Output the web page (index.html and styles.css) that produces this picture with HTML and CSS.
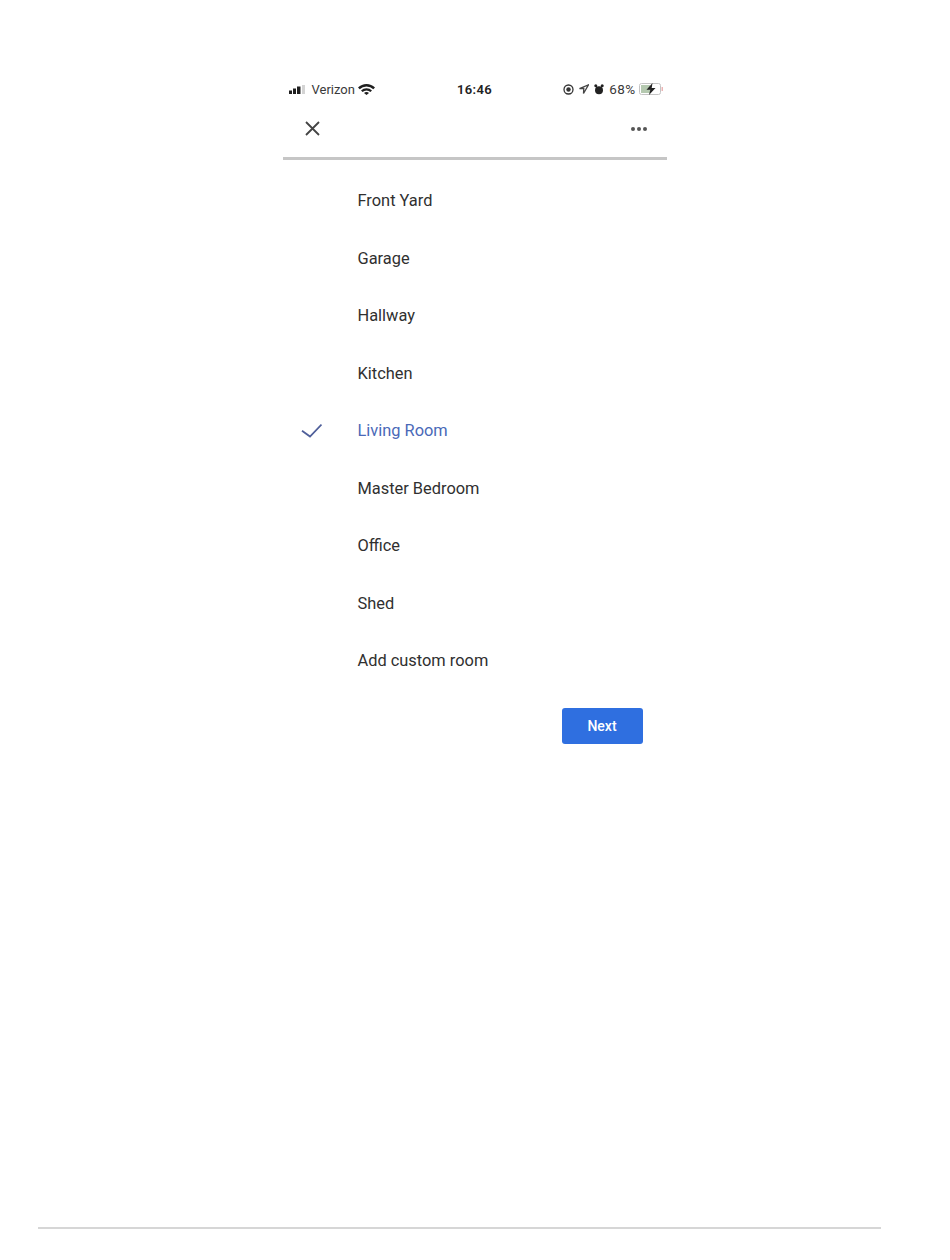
FILE: index.html
```html
<!DOCTYPE html>
<html lang="en">
<head>
  <meta charset="UTF-8" />
  <title>Choose a room</title>
  <link rel="stylesheet" href="styles.css">
</head>
<body>
  <div class="page">
    <div class="phone">
      <div class="status-bar">
        <div class="status-left">
          <svg class="signal" width="18" height="9" viewBox="0 0 18 9">
            <rect x="0" y="5.500" width="3" height="3.500" fill="#1f1f1f"/>
            <rect x="4" y="3.500" width="3" height="5.500" fill="#1f1f1f"/>
            <rect x="8" y="1.500" width="3.500" height="7.500" fill="#1f1f1f"/>
            <rect x="13" y="0" width="3" height="9" fill="#d4d4d4"/>
          </svg>
          <span class="carrier">Verizon</span>
          <svg class="wifi" width="17" height="11" viewBox="0 0 17 11">
            <path d="M0 3.600a12 12 0 0 1 17 0L15.300 5.300a9.600 9.600 0 0 0-13.600 0z" fill="#1f1f1f"/>
            <path d="M3 6.500a7.800 7.800 0 0 1 11 0L12.400 8.100a5.500 5.500 0 0 0-7.800 0z" fill="#1f1f1f"/>
            <path d="M6 9a3.400 3.400 0 0 1 5 0L8.500 11z" fill="#1f1f1f"/>
          </svg>
        </div>
        <span class="clock">16:46</span>
        <div class="status-right">
          <svg width="11" height="11" viewBox="0 0 11 11">
            <circle cx="5.500" cy="5.500" r="4.500" fill="none" stroke="#333" stroke-width="1.300"/>
            <circle cx="5.500" cy="5.500" r="2.200" fill="#333"/>
          </svg>
          <svg width="10" height="10" viewBox="0 0 10 10">
            <path d="M9.500 .8 .5 4.500h4.300L4.500 9.500z" fill="none" stroke="#444" stroke-width="1.300"/>
          </svg>
          <svg width="10" height="11" viewBox="0 0 10 11">
            <circle cx="5" cy="6.300" r="4" fill="#222"/>
            <circle cx="1.800" cy="1.800" r="1.500" fill="#222"/>
            <circle cx="8.200" cy="1.800" r="1.500" fill="#222"/>
          </svg>
          <span class="battery-pct">68%</span>
          <svg class="battery" width="24" height="12" viewBox="0 0 24 12">
            <rect x=".5" y=".5" width="21" height="11" rx="2" fill="#fff" stroke="#c4c4c4"/>
            <rect x="2" y="2" width="9" height="8" fill="#b5c9b0"/>
            <path d="M13.500 0 7.500 6.800h3.800L10 12l6.500-7h-3.800z" fill="#222"/>
            <rect x="22.500" y="4" width="1.500" height="4" fill="#ecb4b4"/>
          </svg>
        </div>
      </div>

      <div class="top-bar">
        <svg class="close-icon" width="15" height="15" viewBox="0 0 15 15">
          <path d="M1 1l13 13M14 1L1 14" stroke="#444" stroke-width="1.800" fill="none"/>
        </svg>
        <div class="more-icon"><i></i><i></i><i></i></div>
      </div>

      <ul class="room-list">
        <li class="room">Front Yard</li>
        <li class="room">Garage</li>
        <li class="room">Hallway</li>
        <li class="room">Kitchen</li>
        <li class="room selected">
          <svg class="check" width="22" height="16" viewBox="0 0 22 16">
            <path d="M2 8.700l8 5.800L21.500 2.500" stroke="#4f5f9a" stroke-width="1.800" fill="none"/>
          </svg>
          Living Room
        </li>
        <li class="room">Master Bedroom</li>
        <li class="room">Office</li>
        <li class="room">Shed</li>
        <li class="room">Add custom room</li>
      </ul>

      <div class="actions">
        <button class="next-btn">Next</button>
      </div>
    </div>
    <div class="footer-rule"></div>
  </div>
</body>
</html>
```

FILE: styles.css
```css
body {
  margin: 0;
  background-color: #ffffff;
  font-family: 'Roboto', sans-serif;
}

.page {
  height: 1260px;
  display: flex;
  flex-direction: column;
  align-items: center;
}

.phone {
  width: 384px;
  margin-top: 78px;
  margin-left: -1px;
}

.status-bar {
  height: 22px;
  padding: 0 6px;
  display: grid;
  grid-template-columns: 1fr auto 1fr;
  align-items: center;
  font-size: 13px;
  color: #3a3a3a;
}

.status-left {
  display: flex;
  align-items: center;
  gap: 5px;
}

.carrier {
  margin-right: -2px;
}

.clock {
  font-weight: 600;
  color: #222;
  letter-spacing: 0.4px;
}

.status-right {
  display: flex;
  align-items: center;
  justify-content: flex-end;
  gap: 5px;
  margin-right: -2px;
}

.battery-pct {
  font-size: 13.5px;
  letter-spacing: 0.4px;
}

.battery {
  margin-left: -2px;
}

.top-bar {
  height: 60px;
  padding: 0 20px 0 22px;
  display: flex;
  justify-content: space-between;
  align-items: center;
  border-bottom: 3px solid #c6c6c6;
  box-sizing: border-box;
}

.more-icon {
  display: flex;
  gap: 2px;
}

.more-icon i {
  width: 4px;
  height: 4px;
  border-radius: 50%;
  background-color: #555;
}

.room-list {
  list-style: none;
  margin: 12px 0 0;
  padding: 0;
}

.room {
  position: relative;
  height: 57.5px;
  padding-left: 75px;
  display: flex;
  align-items: center;
  font-size: 16.4px;
  color: #303030;
}

.room.selected {
  color: #4a69b8;
}

.check {
  position: absolute;
  left: 17px;
  top: 20px;
}

.actions {
  display: flex;
  justify-content: flex-end;
  padding-right: 24px;
  margin-top: 18px;
}

.next-btn {
  width: 81px;
  height: 36px;
  border: none;
  border-radius: 3px;
  background-color: #2f6fe0;
  color: #ffffff;
  font-family: 'Roboto', sans-serif;
  font-size: 14px;
  font-weight: 500;
}

.footer-rule {
  width: 843px;
  height: 2px;
  margin-top: auto;
  margin-bottom: 31px;
  margin-left: -31px;
  background-color: #d6d6d6;
}
```
